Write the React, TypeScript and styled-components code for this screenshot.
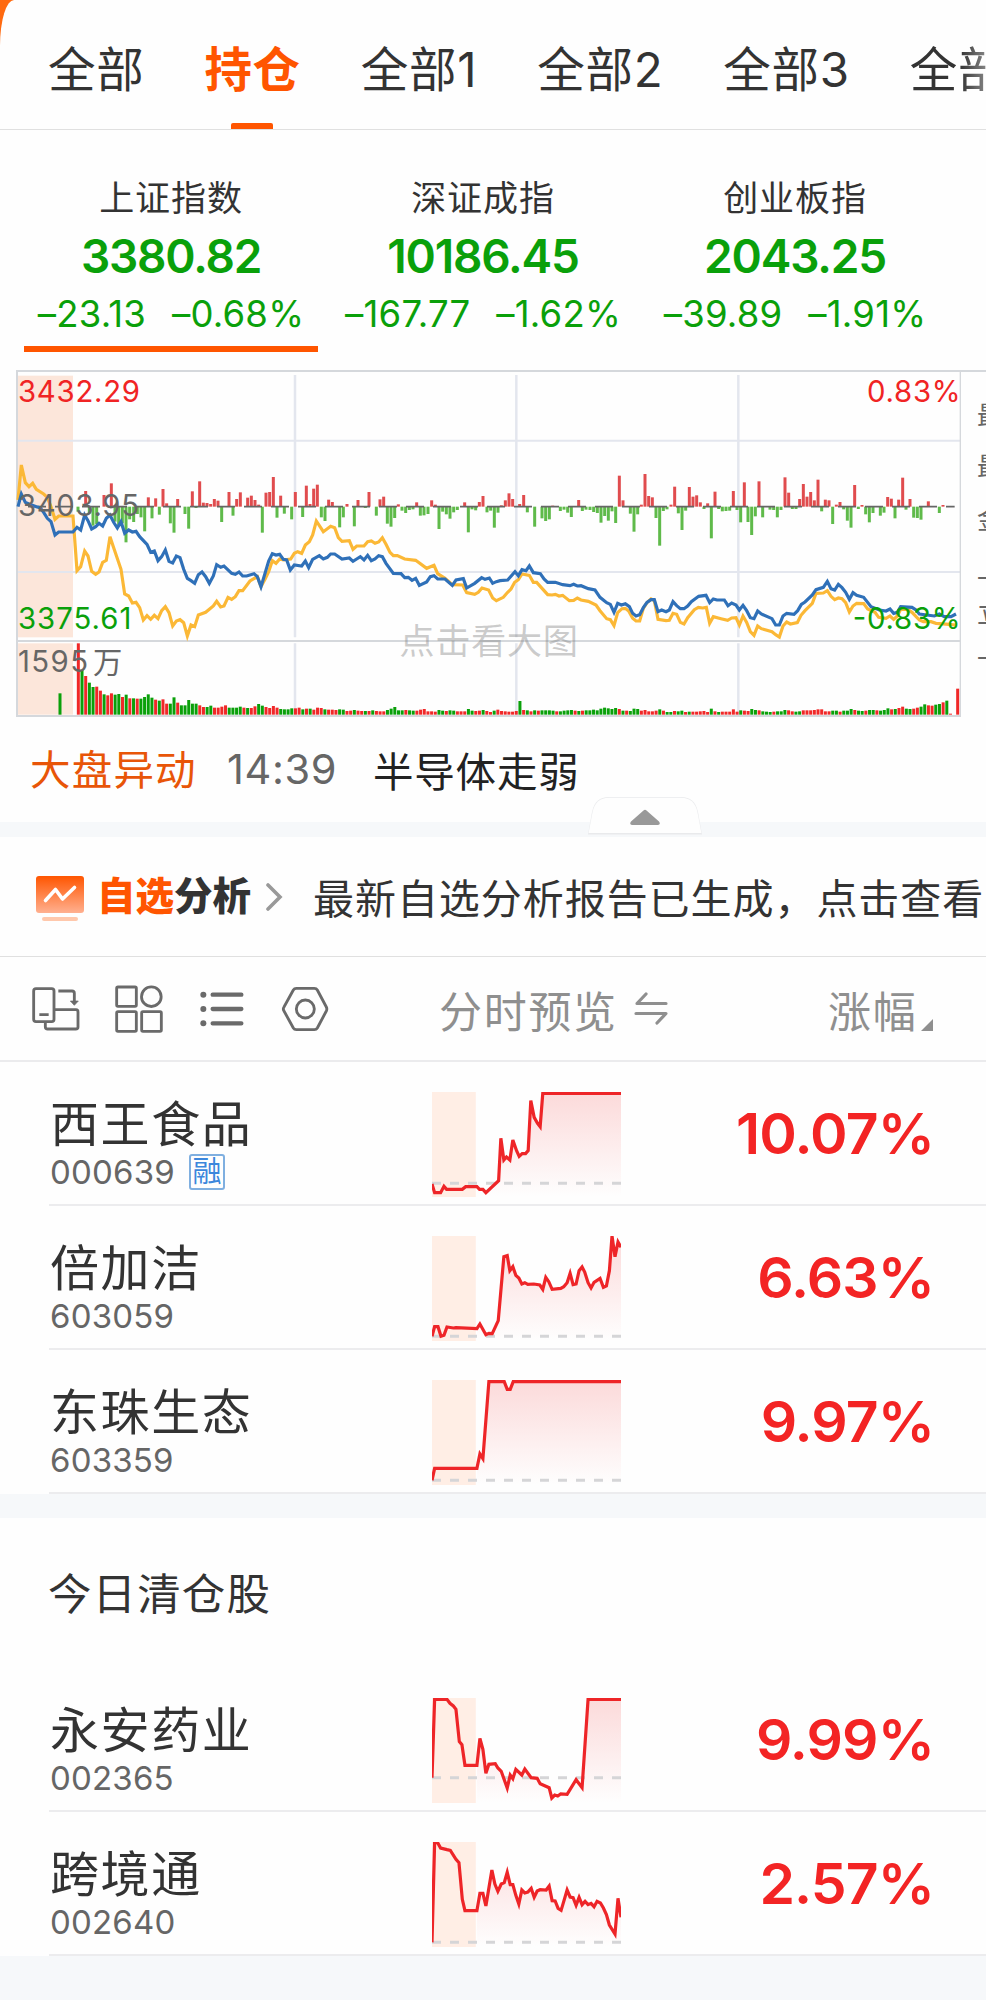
import React from "react";
import styled, { createGlobalStyle, css } from "styled-components";

const GlobalStyle = createGlobalStyle`
  * { box-sizing: border-box; }
  html, body { margin: 0; padding: 0; background: #f6f8fa; }
  body {
    font-family: Inter, "Noto Sans CJK SC", sans-serif;
    color: #333;
    overflow-x: hidden;
  }
`;

const Page = styled.main`
  width: 986px;
  height: 2000px;
  overflow: hidden;
  background: #f6f8fa;
`;

const TopBackdrop = styled.div`
  background: #ff6a10;
`;

const Tabs = styled.nav`
  display: flex;
  gap: 60px;
  height: 130px;
  padding-left: 48px;
  background: #fefefe;
  border-bottom: 1px solid #e0e0e0;
  border-top-left-radius: 14px 46px;
  overflow: hidden;
`;

const Tab = styled.div<{ $active?: boolean; $faded?: boolean }>`
  position: relative;
  flex: none;
  font-size: 47.5px;
  line-height: 139px;
  letter-spacing: 0.7px;
  white-space: nowrap;
  color: ${(p) => (p.$active ? "#ff5500" : "#333")};
  font-weight: ${(p) => (p.$active ? 600 : 400)};
  ${(p) =>
    p.$faded &&
    css`
      mask-image: linear-gradient(to right, #000 50px, rgba(0, 0, 0, 0.6) 76px);
    `}
`;

const TabMark = styled.span`
  position: absolute;
  left: 50%;
  bottom: 0;
  width: 42px;
  height: 6px;
  margin-left: -22px;
  border-radius: 2px 2px 0 0;
  background: #ff5500;
`;

const Indices = styled.section`
  display: flex;
  height: 240px;
  padding: 38px 0 0 15px;
  background: #fefefe;
`;

const IndexCell = styled.div<{ $active?: boolean }>`
  position: relative;
  width: 312px;
  height: 184px;
  display: flex;
  flex-direction: column;
  align-items: center;
  color: #0aa00a;
  ${(p) =>
    p.$active &&
    css`
      &::after {
        content: "";
        position: absolute;
        left: 9px;
        right: 9px;
        bottom: 0;
        height: 6px;
        background: #ff5500;
      }
    `}
`;

const IndexName = styled.div`
  font-size: 35px;
  letter-spacing: 0.9px;
  line-height: 60px;
  color: #333;
`;

const IndexValue = styled.div`
  font-size: 46px;
  font-weight: 600;
  line-height: 56px;
  letter-spacing: -1.2px;
`;

const IndexChange = styled.div`
  display: flex;
  gap: 26px;
  font-size: 36.5px;
  letter-spacing: 0.2px;
  line-height: 60px;
  white-space: nowrap;
`;

const ChartSection = styled.section`
  display: flex;
  height: 347px;
  overflow: hidden;
  background: #fefefe;
  padding-left: 16px;
`;

const Quotes = styled.div`
  flex: 1;
  display: flex;
  flex-direction: column;
  border-top: 2px solid #d5d8dc;
  padding: 20px 0 0 16px;
  font-size: 26px;
  color: #666;
  overflow: hidden;
`;

const QuoteLine = styled.div<{ $h: number }>`
  height: ${(p) => p.$h}px;
  line-height: 48px;
  width: 26px;
`;

const News = styled.section`
  position: relative;
  display: flex;
  align-items: center;
  height: 105px;
  padding: 0 0 5px 30px;
  background: #fefefe;
  font-size: 40.5px;
  white-space: nowrap;
`;

const NewsTag = styled.span`
  width: 197px;
  letter-spacing: 1.2px;
  color: #e85508;
`;

const NewsTime = styled.span`
  width: 146px;
  padding-top: 4px;
  font-size: 41.5px;
  letter-spacing: 0.6px;
  color: #666;
`;

const NewsTitle = styled.span`
  padding-top: 4px;
  letter-spacing: 0.8px;
  color: #222;
`;

const Handle = styled.svg`
  position: absolute;
  left: 586px;
  top: 78px;
  z-index: 1;
`;

const Gap = styled.div<{ $h: number }>`
  height: ${(p) => p.$h}px;
  background: #f6f8fa;
`;

const Analysis = styled.section`
  display: flex;
  align-items: center;
  height: 120px;
  padding-left: 35px;
  background: #fefefe;
  border-bottom: 1px solid #e0e0e0;
  white-space: nowrap;
  overflow: hidden;
`;

const AnalysisLogo = styled.svg`
  margin-top: 4px;
`;

const AnalysisTitle = styled.strong`
  margin-left: 12px;
  width: 169px;
  font-size: 38.5px;
  line-height: 56px;
  padding-bottom: 1px;
  font-weight: 900;
`;

const Accent = styled.span`
  color: #ff5500;
`;

const AnalysisText = styled.span`
  margin-left: 29px;
  padding-bottom: 1px;
  font-size: 41px;
  letter-spacing: 0.95px;
`;

const Toolbar = styled.section`
  display: flex;
  align-items: center;
  height: 105px;
  padding-left: 32px;
  background: #fefefe;
  border-bottom: 2px solid #ebebed;
  color: #8f8f8f;
  font-size: 43px;
  letter-spacing: 1.7px;
`;

const Tools = styled.div`
  display: flex;
  gap: 35px;
  width: 407px;
  padding-top: 1px;
`;

const PreviewHead = styled.div`
  display: flex;
  align-items: center;
  gap: 15px;
  width: 389px;
`;

const SortHead = styled.div`
  display: flex;
  align-items: flex-end;
  gap: 4px;
`;

const SortMark = styled.svg`
  margin-bottom: 9px;
`;

const Row = styled.article`
  display: flex;
  height: 144px;
  padding-left: 49px;
  background: #fefefe;
`;

const RowBody = styled.div`
  flex: 1;
  display: flex;
  border-bottom: 2px solid #ececee;
`;

const Stock = styled.div`
  width: 383px;
  padding: 33px 0 0 1px;
`;

const StockName = styled.div`
  font-size: 49px;
  line-height: 60px;
  letter-spacing: 1.6px;
`;

const StockCode = styled.div`
  display: flex;
  align-items: center;
  gap: 14px;
  height: 34px;
  font-size: 33px;
  letter-spacing: 0.2px;
  color: #666;
`;

const Badge = styled.span`
  width: 36px;
  height: 36px;
  border: 2px solid #7fafe0;
  border-radius: 3px;
  color: #3c87dc;
  font-size: 29px;
  line-height: 31px;
  letter-spacing: 0;
  text-align: center;
`;

const Spark = styled.svg`
  display: block;
  margin-top: 30px;
`;

const Percent = styled.div`
  flex: 1;
  padding: 36px 52px 0 0;
  font-size: 57px;
  line-height: 72px;
  font-weight: 600;
  letter-spacing: -0.9px;
  text-align: right;
  color: #f32424;
`;

const GroupHeading = styled.h2`
  margin: 0;
  height: 150px;
  padding-left: 48px;
  background: #fefefe;
  font-size: 43.5px;
  font-weight: 400;
  letter-spacing: 1.1px;
  line-height: 152px;
`;

const YELLOW =
  "54,420 64,315 76,368 87,380 98,370 109,388 131,402 142,412 153,440 165,478 176,468 219,468 231,632 242,620 254,573 264,588 275,634 287,643 297,636 308,607 319,601 330,530 341,563 363,628 374,702 386,708 397,729 408,727 419,743 430,780 441,767 452,778 463,766 474,776 485,752 496,740 507,758 518,798 529,783 540,779 551,788 562,828 573,795 584,800 595,765 617,757 640,738 650,724 662,741 672,738 684,712 695,718 706,710 717,692 728,692 750,663 772,650 783,680 795,658 806,635 817,602 828,610 839,597 850,600 872,597 883,580 893,575 905,580 916,555 928,545 938,525 949,483 970,515 992,499 1004,503 1015,533 1026,544 1048,542 1059,568 1070,558 1092,558 1103,545 1114,543 1125,550 1136,546 1147,533 1158,553 1170,577 1180,587 1192,587 1214,597 1247,601 1280,625 1302,616 1313,641 1335,655 1357,674 1388,675 1400,698 1424,703 1435,697 1446,684 1466,690 1478,714 1489,722 1510,712 1523,697 1533,687 1544,667 1555,659 1566,642 1588,646 1600,667 1610,667 1643,704 1656,705 1666,703 1677,708 1688,706 1708,722 1721,721 1732,714 1743,720 1765,724 1788,735 1800,752 1820,776 1831,779 1842,797 1853,758 1866,746 1876,745 1886,753 1898,775 1908,783 1919,783 1930,745 1941,728 1953,717 1963,722 1974,778 1998,782 2008,781 2019,760 2030,763 2041,787 2052,792 2063,773 2083,749 2095,742 2108,744 2119,742 2129,790 2140,770 2163,776 2183,781 2195,774 2208,773 2218,795 2229,768 2240,787 2251,815 2262,826 2273,798 2284,806 2316,815 2327,824 2338,831 2349,798 2360,786 2371,792 2392,788 2403,766 2415,752 2437,730 2448,700 2470,699 2482,692 2493,709 2504,719 2515,714 2526,716 2537,728 2548,756 2559,738 2570,730 2591,731 2603,747 2625,757 2636,772 2658,775 2670,768 2681,778 2692,768 2702,748 2723,748 2736,757 2758,780 2770,785 2793,785 2808,790 2848,793 2866,795";

const BLUE =
  "54,440 64,402 76,427 87,432 109,440 120,443 131,457 142,475 153,485 165,525 176,516 219,516 231,502 242,510 254,465 264,482 275,507 287,500 297,490 308,498 319,475 330,465 341,487 352,504 363,485 374,520 386,510 397,516 408,514 419,530 441,553 452,577 463,573 474,602 485,590 496,570 507,604 518,609 529,588 540,593 551,628 562,655 573,662 584,670 595,644 606,636 617,650 628,670 640,648 650,614 662,622 672,618 695,640 706,643 717,636 728,648 740,648 762,641 772,650 783,680 795,640 806,603 817,581 828,585 839,583 850,598 860,600 871,630 883,615 905,618 916,603 926,623 938,598 958,587 970,597 982,592 992,582 1004,582 1026,597 1048,594 1059,604 1070,597 1081,590 1092,600 1103,586 1114,602 1125,597 1136,587 1147,590 1158,610 1180,640 1203,641 1214,653 1225,652 1236,661 1247,655 1258,676 1280,666 1291,650 1302,647 1313,657 1335,657 1357,676 1368,660 1390,656 1400,684 1424,670 1445,653 1455,658 1468,654 1478,670 1489,665 1500,662 1523,660 1545,635 1555,647 1566,629 1578,632 1588,618 1600,638 1621,641 1632,657 1643,667 1666,667 1688,674 1710,677 1721,673 1732,678 1743,677 1765,686 1785,690 1800,712 1820,728 1831,733 1842,757 1853,730 1864,735 1876,731 1888,740 1898,760 1908,768 1919,764 1930,743 1941,727 1953,719 1963,719 1974,755 1985,750 1998,755 2008,750 2019,725 2030,737 2041,746 2052,746 2063,738 2074,725 2096,709 2118,706 2129,728 2140,717 2151,720 2173,720 2184,737 2195,729 2208,735 2218,750 2229,736 2240,752 2251,773 2262,776 2273,753 2284,762 2316,776 2327,795 2338,795 2349,768 2360,760 2382,763 2393,752 2404,733 2415,726 2437,705 2448,689 2470,682 2482,664 2493,686 2504,690 2515,673 2526,683 2537,697 2548,718 2559,698 2570,706 2591,712 2613,740 2638,750 2658,753 2670,747 2681,760 2692,757 2702,740 2736,742 2748,750 2758,762 2803,768 2818,762 2833,770 2853,770 2868,762";

// Net flow bars, as "x:y" of the bar's far end. The second list is offset by half a chart.
const FLOW_LEFT =
  "257:393 312:405 334:370 445:412 467:415 489:387 500:430 533:417 577:394 599:364 610:428 621:429 632:432 643:417 654:422 687:396 710:417 721:397 743:413 754:407 765:420 776:434 798:398 809:396 820:351 842:407 886:396 919:377 930:432 941:386 952:374 986:419 997:426 1041:432 1074:420 1107:396 1140:418 1151:410 1195:433 1250:427 1295:421 1306:434 1394:427 1438:426 1449:408 234:455 268:460 279:497 290:492 345:485 356:500 367:490 378:547 389:478 401:486 412:462 423:472 434:514 456:475 478:464 511:490 522:518 555:462 566:506 588:444 665:486 699:467 787:518 831:473 853:461 875:478 908:471 964:472 975:483 1019:502 1030:472 1063:499 1096:444 1129:467 1162:491 1173:500 1184:474 1206:452 1217:459 1228:450 1239:448 1261:467 1272:466 1284:462 1317:507 1328:455 1339:463 1350:476 1361:457 1372:450 1405:517 1416:448 1427:451";
const FLOW_RIGHT =
  "46:436 58:421 69:400 80:417 101:432 113:405 200:437 278:420 400:347 411:421 466:434 477:342 488:408 499:412 555:434 566:380 610:381 621:410 632:406 643:427 665:430 687:395 742:393 775:367 819:364 897:352 908:398 941:417 952:372 963:410 974:396 985:421 996:359 1018:419 1029:421 1051:434 1062:426 1106:375 1128:435 1205:411 1216:416 1238:419 1250:353 1272:417 1327:424 1371:435 3:457 14:452 25:503 36:458 124:457 146:500 168:475 179:483 190:478 223:453 234:449 245:458 256:471 289:453 300:449 312:450 323:456 334:459 345:488 356:468 367:482 378:454 389:489 433:461 444:515 455:463 510:474 521:557 532:453 543:448 577:460 588:510 599:452 654:447 676:535 698:447 709:454 720:453 731:452 753:450 764:487 786:486 797:525 808:469 830:472 852:449 863:450 874:472 885:450 919:447 930:447 1007:454 1040:492 1073:448 1084:482 1095:503 1117:447 1139:463 1150:487 1161:459 1183:467 1194:458 1227:475 1260:449 1283:473 1294:474 1305:479 1360:459";

const parseFlow = (text: string, shift: number) =>
  text.split(" ").map((pair) => {
    const [x, y] = pair.split(":").map(Number);
    return { x: x + shift, y };
  });
const FLOW = [...parseFlow(FLOW_LEFT, 0), ...parseFlow(FLOW_RIGHT, 1458)];

// One entry per minute: r = rising, g = falling, then the bar's height.
const VOLUME =
  "r214 g134 r116 g96 g83 r84 r72 g61 r58 r64 g60 g62 r53 g60 r49 g49 r48 g48 g53 g61 g51 r45 g42 r46 r33 g33 g52 r36 g28 g28 g44 g33 g33 r28 r23 g23 g27 r21 r21 r24 r28 g21 g21 g21 g24 r21 g20 r20 r25 g32 g27 r23 r20 r26 r21 g17 g16 g16 g19 r19 r21 g16 r18 g18 r15 r21 r20 g16 r15 r15 r14 g16 g15 r11 r12 g14 r12 r11 g11 r11 g13 r11 r10 r10 g14 g18 g23 g13 g13 r14 g13 g12 r12 r15 r17 r10 r10 r9 g14 g12 r11 g13 g12 r10 r10 r10 g17 g12 r11 r12 g14 r11 r8 g12 r15 r11 r10 r9 r9 r11 g41 r14 g13 r10 g13 r12 g13 g13 g13 g12 r10 g10 g12 g13 g14 r12 g11 r12 g13 g13 g15 g13 g18 g21 g19 g17 g20 r17 g12 r12 g11 g18 g17 r12 r14 r10 r10 r12 g16 r12 g8 g8 r11 g10 g12 r8 g9 r9 r9 r10 r11 r8 g18 r10 g8 r9 r9 r9 r16 r9 g13 r12 r11 g17 g14 r13 g10 g9 g8 r9 g10 g10 g14 r13 r10 g9 g10 r13 r13 r13 r14 r16 r16 r10 r10 g12 g12 r9 g12 g12 g17 r14 g12 g11 r12 g14 g14 r13 g12 g14 g19 r16 g17 r20 r24 g18 g17 r18 r21 g24 g31 r28 r27 g30 g32 r37 g42 r3"
    .split(" ")
    .map((s) => ({ up: s[0] === "r", h: Number(s.slice(1)) }));

const ChartSvg = styled.svg`
  flex: none;
`;

function MarketChart() {
  return (
    <ChartSvg width="945" height="347" viewBox="48 30 2835 1041">
      <rect x="54" y="47" width="165" height="785" fill="#fce6da" />
      <rect x="54" y="850" width="165" height="214" fill="#fce6da" />
      <g stroke="#e3e6ee" strokeWidth="6">
        <path d="M54 242H2880M54 636H2880" />
        <path d="M885 45V832M1549 45V832M2215 45V832M885 850V1065M1549 850V1065M2215 850V1065" strokeWidth="7.500" />
      </g>
      <path d="M2881 33V1068" stroke="#d5d8dc" strokeWidth="4" />
      <path d="M48 33H2883M51 30V1071M48 843H2883M48 1068H2883" stroke="#d5d8dc" strokeWidth="6" />
      {FLOW.map((b) => (
        <rect
          key={b.x}
          x={b.x - 4.5}
          width="9"
          y={Math.min(b.y, 440)}
          height={Math.abs(b.y - 440)}
          fill={b.y < 440 ? "#e04c4e" : "#5fba4a"}
        />
      ))}
      <path d="M84 440H2864" stroke="#666" strokeWidth="5" strokeDasharray="54 27" />
      {VOLUME.map((v, i) => (
        <rect key={i} x={230.5 + i * 11.04} width="9" y={1064 - v.h} height={v.h} fill={v.up ? "#f02828" : "#0aa00a"} />
      ))}
      <rect x="175.5" y="1000" width="9" height="64" fill="#0aa00a" />
      <rect x="2868.5" y="986" width="9" height="78" fill="#f02828" />
      <polyline points={YELLOW} fill="none" stroke="#fbb836" strokeWidth="9.500" />
      <polyline points={BLUE} fill="none" stroke="#2f70b8" strokeWidth="9.500" />
      <g fontSize="88" fontFamily='Inter, "Noto Sans CJK SC", sans-serif'>
        <text x="54" y="126" textLength="366" fill="#f02424">3432.29</text>
        <text x="54" y="467" textLength="363" fill="#666">3403.95</text>
        <text x="54" y="808" textLength="340" fill="#0aa00a">3375.61</text>
        <text x="54" y="937" textLength="210" fill="#666">1595</text>
        <text x="279" y="938" fontSize="88" fill="#666">万</text>
        <text x="2601" y="126" textLength="281" fill="#f02424">0.83%</text>
        <text x="2558" y="808" textLength="324" fill="#0aa00a">-0.83%</text>
        <text x="1198" y="881" fontSize="106" textLength="536" fill="#787878" fillOpacity="0.38">点击看大图</text>
      </g>
    </ChartSvg>
  );
}

interface SparkData {
  top: number;
  base: number;
  points: string;
}

function Sparkline({ data, id }: { data: SparkData; id: string }) {
  const bottom = data.top + 315;
  const session = data.points
    .split(" ")
    .filter((p) => Number(p.split(",")[0]) >= 206)
    .join(" ");
  return (
    <Spark width="189" height="105" viewBox={`86 ${data.top} 505 315`} preserveAspectRatio="none">
      <defs>
        <linearGradient id={id} gradientUnits="userSpaceOnUse" x1="0" x2="0" y1={data.top} y2={bottom}>
          <stop offset="0" stopColor="#f02828" stopOpacity="0.17" />
          <stop offset="1" stopColor="#f02828" stopOpacity="0" />
        </linearGradient>
      </defs>
      <rect x="86" y={data.top} width="117" height="315" fill="#ffeee5" />
      <polygon points={`206,${bottom} ${session} 591,${bottom}`} fill={`url(#${id})`} />
      <path d={`M86 ${data.base}H591`} stroke="#d5d5d7" strokeWidth="3" strokeDasharray="9 9" vectorEffect="non-scaling-stroke" />
      <polyline points={data.points} fill="none" stroke="#ee2528" strokeWidth="3.2" vectorEffect="non-scaling-stroke" />
    </Spark>
  );
}

const HELD = [
  {
    name: "西王食品",
    code: "000639",
    tag: "融",
    pct: "10.07%",
    spark: {
      top: 96,
      base: 370,
      points:
        "86,372 93,398 109,398 118,379 125,388 167,388 176,380 206,380 213,388 222,388 230,398 264,362 270,235 278,300 285,291 294,300 302,240 312,272 319,289 327,281 336,281 343,272 350,122 359,172 368,190 375,200 382,100 591,100",
    },
  },
  {
    name: "倍加洁",
    code: "603059",
    pct: "6.63%",
    spark: {
      top: 528,
      base: 829,
      points:
        "86,829 93,800 102,800 110,829 118,826 126,801 143,804 150,803 206,806 214,792 230,824 238,820 247,821 263,782 278,590 287,587 294,632 302,620 310,646 318,654 326,672 334,668 342,673 358,672 374,675 382,688 390,652 398,665 407,688 430,685 438,680 447,668 455,640 463,674 471,672 479,632 487,621 494,636 503,668 511,684 519,667 535,655 544,682 552,678 560,632 567,528 575,590 583,546 591,562",
    },
  },
  {
    name: "东珠生态",
    code: "603359",
    pct: "9.97%",
    spark: {
      top: 960,
      base: 1261,
      points: "86,1261 93,1225 206,1225 214,1182 222,1196 238,965 279,965 287,988 295,988 303,965 591,965",
    },
  },
];

const CLEARED = [
  {
    name: "永安药业",
    code: "002365",
    pct: "9.99%",
    spark: {
      top: 114,
      base: 353,
      points:
        "86,353 93,118 126,118 134,130 143,138 150,148 159,245 166,254 174,316 206,316 214,235 222,268 230,340 238,313 255,311 262,324 271,334 287,384 295,345 302,356 310,328 326,345 334,327 351,353 367,355 375,371 399,383 406,414 414,405 422,408 430,402 447,403 471,359 487,383 503,118 591,118",
    },
  },
  {
    name: "跨境通",
    code: "002640",
    pct: "2.57%",
    spark: {
      top: 546,
      base: 847,
      points:
        "86,847 93,548 101,548 109,564 126,569 135,571 150,598 158,608 167,718 174,752 206,752 214,700 222,700 230,738 246,630 254,672 262,694 271,672 279,668 287,637 295,674 302,674 310,706 318,732 326,690 334,699 342,696 351,685 359,712 367,693 375,689 391,690 399,678 407,722 415,723 423,745 431,751 447,690 455,711 463,713 471,736 479,712 487,734 495,724 503,734 511,730 519,740 527,724 536,729 544,744 552,764 560,795 575,822 583,715 591,772",
    },
  },
];

interface StockItem {
  name: string;
  code: string;
  tag?: string;
  pct: string;
  spark: SparkData;
}

function StockRow({ item }: { item: StockItem }) {
  return (
    <Row>
      <RowBody>
        <Stock>
          <StockName>{item.name}</StockName>
          <StockCode>
            {item.code}
            {item.tag && <Badge>{item.tag}</Badge>}
          </StockCode>
        </Stock>
        <Sparkline data={item.spark} id={`fill-${item.code}`} />
        <Percent>{item.pct}</Percent>
      </RowBody>
    </Row>
  );
}

const INDICES = [
  { name: "上证指数", value: "3380.82", diff: "–23.13", pct: "–0.68%", active: true },
  { name: "深证成指", value: "10186.45", diff: "–167.77", pct: "–1.62%" },
  { name: "创业板指", value: "2043.25", diff: "–39.89", pct: "–1.91%" },
];

const toolIcon = { width: 48, height: 48, fill: "none", stroke: "#6a6a6a", strokeWidth: 8.5 };

export default function App() {
  return (
    <Page>
      <GlobalStyle />
      <TopBackdrop>
        <Tabs>
          <Tab>全部</Tab>
          <Tab $active>
            持仓
            <TabMark />
          </Tab>
          <Tab>全部1</Tab>
          <Tab>全部2</Tab>
          <Tab>全部3</Tab>
          <Tab $faded>全部</Tab>
        </Tabs>
      </TopBackdrop>

      <Indices>
        {INDICES.map((x) => (
          <IndexCell key={x.name} $active={x.active}>
            <IndexName>{x.name}</IndexName>
            <IndexValue>{x.value}</IndexValue>
            <IndexChange>
              <span>{x.diff}</span>
              <span>{x.pct}</span>
            </IndexChange>
          </IndexCell>
        ))}
      </Indices>

      <ChartSection>
        <MarketChart />
        <Quotes>
          <QuoteLine $h={51}>最</QuoteLine>
          <QuoteLine $h={53}>最</QuoteLine>
          <QuoteLine $h={59}>金</QuoteLine>
          <QuoteLine $h={35}>一</QuoteLine>
          <QuoteLine $h={45}>立</QuoteLine>
          <QuoteLine $h={40}>一</QuoteLine>
        </Quotes>
      </ChartSection>

      <News>
        <NewsTag>大盘异动</NewsTag>
        <NewsTime>14:39</NewsTime>
        <NewsTitle>半导体走弱</NewsTitle>
        <Handle width="118" height="42" viewBox="0 0 118 42">
          <path d="M2 39.5 6 17Q9 2 23 2H95Q109 2 112 17L116 39.5Z" fill="#e9eaec" />
          <path d="M2.6 38 6.6 17Q9.500 2.700 23 2.700H95Q108.500 2.700 111.400 17L115.400 38Z" fill="#fefefe" />
          <path d="M57.500 15.600Q59 14 60.500 15.600L73 26.500Q75 29.500 72 30H46Q43 29.500 45 26.500Z" fill="#999" />
        </Handle>
      </News>
      <Gap $h={15} />

      <Analysis>
        <AnalysisLogo width="50" height="48" viewBox="0 0 50 48">
          <defs>
            <linearGradient id="logo" x1="0" x2="0" y1="0" y2="1">
              <stop offset="0" stopColor="#ff5500" />
              <stop offset="1" stopColor="#ffb090" />
            </linearGradient>
          </defs>
          <rect x="1" y="1" width="48" height="37" rx="3" fill="url(#logo)" />
          <path d="M10.500 25.500 20.500 14.500 27.500 24 39.500 12.500" fill="none" stroke="#fff" strokeWidth="3.600" strokeLinecap="round" strokeLinejoin="round" />
          <rect x="7" y="42" width="36" height="4" rx="2" fill="#ffc8ac" />
        </AnalysisLogo>
        <AnalysisTitle>
          <Accent>自选</Accent>分析
        </AnalysisTitle>
        <svg width="18" height="30" viewBox="0 0 18 30">
          <path d="M2 3 14 15 2 27" fill="none" stroke="#999" strokeWidth="3.600" strokeLinecap="round" />
        </svg>
        <AnalysisText>最新自选分析报告已生成，点击查看</AnalysisText>
      </Analysis>

      <Toolbar>
        <Tools>
          <svg {...toolIcon} viewBox="96 376 144 144">
            <rect x="101" y="387" width="61" height="99" rx="7" />
            <path d="M118 465H146M162 450H228Q234 450 234 457V502Q234 508 227 508H143Q136 508 136 501V487M175 394H216Q223 394 223 401V424" />
            <path d="M211 424H235L223 437Z" fill="#6a6a6a" strokeWidth="2" />
          </svg>
          <svg {...toolIcon} viewBox="344 376 144 144">
            <rect x="349" y="382" width="59" height="58" rx="4" />
            <circle cx="453" cy="411" r="29.500" />
            <rect x="349" y="456" width="59" height="59" rx="4" />
            <rect x="424" y="456" width="59" height="59" rx="4" />
          </svg>
          <svg {...toolIcon} viewBox="592 376 144 144">
            <path d="M636 405H722M636 448H722M636 491H722" strokeWidth="13" strokeLinecap="round" />
            <g fill="#6a6a6a" stroke="none">
              <circle cx="608" cy="405" r="9" />
              <circle cx="608" cy="448" r="9" />
              <circle cx="608" cy="491" r="9" />
            </g>
          </svg>
          <svg {...toolIcon} viewBox="840 376 144 144">
            <path d="M886 386H940Q946 386 949 391L976 442Q979 448 976 454L949 505Q946 510 940 510H886Q880 510 877 505L849 454Q845 448 849 442L877 391Q880 386 886 386Z" />
            <circle cx="913" cy="448" r="27" />
          </svg>
        </Tools>
        <PreviewHead>
          分时预览
          <svg width="36" height="34" viewBox="0 0 36 34" fill="none" stroke="#8f8f8f" strokeWidth="3.200" strokeLinecap="round" strokeLinejoin="round">
            <path d="M33 11.500H4L13 2M3 21.500H33L24 31" />
          </svg>
        </PreviewHead>
        <SortHead>
          涨幅
          <SortMark width="12" height="12" viewBox="0 0 12 12">
            <path d="M12 0V12H0Z" fill="#8f8f8f" />
          </SortMark>
        </SortHead>
      </Toolbar>

      {HELD.map((s) => (
        <StockRow key={s.code} item={s} />
      ))}
      <Gap $h={24} />
      <GroupHeading>今日清仓股</GroupHeading>
      {CLEARED.map((s) => (
        <StockRow key={s.code} item={s} />
      ))}
    </Page>
  );
}
